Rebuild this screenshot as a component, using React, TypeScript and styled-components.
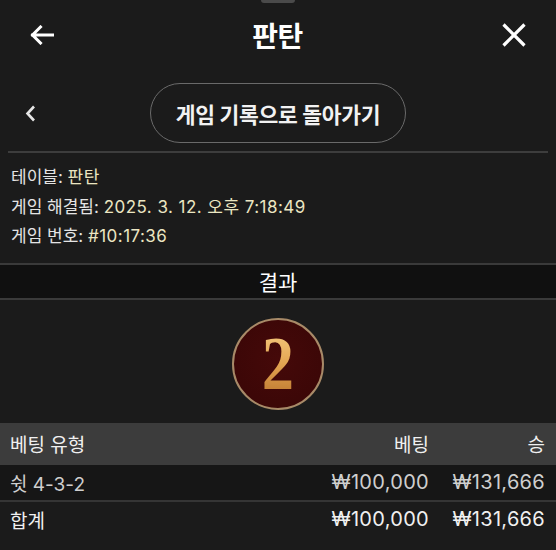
import styled, { createGlobalStyle } from "styled-components";

const GlobalStyle = createGlobalStyle`
  html, body {
    margin: 0;
    padding: 0;
    background: #1b1b1b;
  }
  body {
    font-family: "Inter", "Noto Sans CJK KR", sans-serif;
    color: #ffffff;
  }
`;

const Page = styled.div`
  width: 556px;
  height: 550px;
  background: #1b1b1b;
  overflow: hidden;
`;

const Handle = styled.div`
  width: 34px;
  height: 3px;
  margin: 0 auto;
  border-radius: 0 0 3px 3px;
  background: #4a4a4a;
`;

const Header = styled.header`
  height: 64px;
  display: flex;
  align-items: center;
  justify-content: space-between;
  padding: 0 29px 0 30px;
`;

const Title = styled.h1`
  margin: 0;
  font-size: 28px;
  font-weight: 700;
  letter-spacing: -0.5px;
`;

const IconButton = styled.button`
  background: none;
  border: 0;
  padding: 0;
  display: flex;
  color: #ffffff;
`;

const NavRow = styled.div`
  display: grid;
  grid-template-columns: 1fr auto 1fr;
  align-items: center;
  padding: 16px 0 8px;
`;

const Chevron = styled.span`
  padding-left: 25px;
  display: flex;
  color: #e6e6e6;
`;

const PillButton = styled.button`
  height: 60px;
  padding: 0 25px;
  border: 1.5px solid #6a6a6a;
  border-radius: 30px;
  background: transparent;
  color: #f2f2f2;
  font-family: inherit;
  font-size: 21.5px;
  font-weight: 700;
  letter-spacing: -0.3px;
`;

const Divider = styled.hr`
  margin: 0 8px;
  border: 0;
  height: 2px;
  background: #3d3d3d;
`;

const Info = styled.div`
  padding: 10px 10px 11px 11px;
  font-size: 17px;
  line-height: 29.5px;
`;

const InfoLine = styled.div`
  color: #e4e4e4;
`;

const Value = styled.span`
  color: #ebe6c2;
  letter-spacing: 0.45px;
`;

const Band = styled.div`
  height: 33px;
  display: flex;
  align-items: center;
  justify-content: center;
  background: #101010;
  border-top: 2px solid #3a3a3a;
  border-bottom: 2px solid #3a3a3a;
  font-size: 21px;
  font-weight: 400;
`;

const ResultArea = styled.div`
  display: flex;
  justify-content: center;
  padding: 18px 0 13px;
`;

const Token = styled.div`
  width: 88px;
  height: 88px;
  border-radius: 50%;
  border: 2px solid #a88a68;
  background: radial-gradient(circle at 50% 45%, #450909 0%, #380606 100%);
  display: flex;
  align-items: center;
  justify-content: center;
`;

const TokenNumber = styled.span`
  font-family: "Liberation Serif", "DejaVu Serif", serif;
  font-size: 76px;
  font-weight: 700;
  line-height: 1;
  margin-top: -1px;
  transform: scaleX(0.85);
  background: linear-gradient(180deg, #f6cf86 0%, #e4a552 50%, #b8732c 100%);
  -webkit-background-clip: text;
  background-clip: text;
  color: transparent;
`;

const Row = styled.div<{ $variant: "head" | "item" | "total" }>`
  display: grid;
  grid-template-columns: 1fr 110px 116px;
  align-items: center;
  padding: 0 11px 0 10px;
  height: ${(p) => (p.$variant === "head" ? "42px" : "35px")};
  background: ${(p) =>
    p.$variant === "head" ? "#3c3c3c" : p.$variant === "item" ? "#161616" : "#1b1b1b"};
  border-bottom: ${(p) => (p.$variant === "item" ? "2px solid #353535" : "0")};
  color: ${(p) => (p.$variant === "item" ? "#cfcfcf" : "#f0f0f0")};
  font-size: 19px;
`;

const Cell = styled.span<{ $right?: boolean }>`
  text-align: ${(p) => (p.$right ? "right" : "left")};
  white-space: nowrap;
`;

const Amount = styled(Cell)`
  font-size: 20px;
  letter-spacing: 0.3px;
`;

export default function App() {
  return (
    <Page>
      <GlobalStyle />
      <Handle />
      <Header>
        <IconButton aria-label="back">
          <svg width="24" height="20" viewBox="0 0 24 20" fill="none">
            <path
              d="M23 10H2.5M10.5 2L2.5 10l8 8"
              stroke="currentColor"
              strokeWidth="3"
              strokeLinecap="square"
            />
          </svg>
        </IconButton>
        <Title>판탄</Title>
        <IconButton aria-label="close">
          <svg width="26" height="24" viewBox="0 0 26 24" fill="none">
            <path
              d="M2.5 1.5L23.5 22.5M23.5 1.5L2.5 22.5"
              stroke="currentColor"
              strokeWidth="3.2"
            />
          </svg>
        </IconButton>
      </Header>

      <NavRow>
        <Chevron>
          <svg width="11" height="17" viewBox="0 0 11 17" fill="none">
            <path d="M9 1.5L2.5 8.5L9 15.5" stroke="currentColor" strokeWidth="2.6" />
          </svg>
        </Chevron>
        <PillButton>게임 기록으로 돌아가기</PillButton>
        <span />
      </NavRow>

      <Divider />

      <Info>
        <InfoLine>
          테이블: <Value>판탄</Value>
        </InfoLine>
        <InfoLine>
          게임 해결됨: <Value>2025. 3. 12. 오후 7:18:49</Value>
        </InfoLine>
        <InfoLine>
          게임 번호: <Value>#10:17:36</Value>
        </InfoLine>
      </Info>

      <Band>결과</Band>

      <ResultArea>
        <Token>
          <TokenNumber>2</TokenNumber>
        </Token>
      </ResultArea>

      <Row $variant="head">
        <Cell>베팅 유형</Cell>
        <Cell $right>베팅</Cell>
        <Cell $right>승</Cell>
      </Row>
      <Row $variant="item">
        <Cell>쉿 4-3-2</Cell>
        <Amount $right>₩100,000</Amount>
        <Amount $right>₩131,666</Amount>
      </Row>
      <Row $variant="total">
        <Cell>합계</Cell>
        <Amount $right>₩100,000</Amount>
        <Amount $right>₩131,666</Amount>
      </Row>
    </Page>
  );
}
